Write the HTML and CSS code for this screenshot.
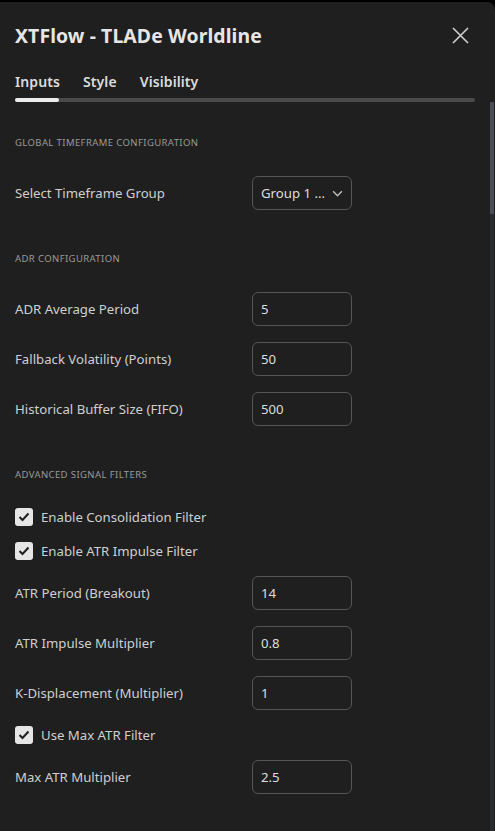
FILE: index.html
```html
<!DOCTYPE html>
<html lang="en">
<head>
  <meta charset="UTF-8" />
  <meta name="viewport" content="width=device-width, initial-scale=1.0"/>
  <title>XTFlow - TLADe Worldline</title>
  <link rel="stylesheet" href="styles.css">
</head>
<body>

  <div class="dialog">
    <!-- Cabecera -->
    <div class="dialog-head">
      <h1 class="dialog-title">XTFlow - TLADe Worldline</h1>
      <button class="close-btn" aria-label="Close">
        <svg width="17" height="17" viewBox="0 0 17 17"><path d="M1 1L16 16M16 1L1 16" stroke="#cfcfcf" stroke-width="1.6" fill="none"/></svg>
      </button>
    </div>

    <!-- Pestañas -->
    <ul class="tab-list" role="tablist">
      <li><button role="tab" aria-selected="true">Inputs</button></li>
      <li><button role="tab" aria-selected="false">Style</button></li>
      <li><button role="tab" aria-selected="false">Visibility</button></li>
    </ul>
    <div class="tab-track"><span class="tab-ink"></span></div>

    <div class="body-wrap">
      <div class="settings">
        <div class="group-title">GLOBAL TIMEFRAME CONFIGURATION</div>
        <div class="row">
          <span class="label">Select Timeframe Group</span>
          <div class="select">
            <span>Group 1 ...</span>
            <svg width="10" height="6" viewBox="0 0 10 6"><path d="M1 1L5 5L9 1" stroke="#bdbdbd" stroke-width="1.4" fill="none"/></svg>
          </div>
        </div>

        <div class="group-title">ADR CONFIGURATION</div>
        <div class="row">
          <span class="label">ADR Average Period</span>
          <div class="field">5</div>
        </div>
        <div class="row">
          <span class="label">Fallback Volatility (Points)</span>
          <div class="field">50</div>
        </div>
        <div class="row">
          <span class="label">Historical Buffer Size (FIFO)</span>
          <div class="field">500</div>
        </div>

        <div class="group-title">ADVANCED SIGNAL FILTERS</div>
        <label class="check-row">
          <span class="check"><svg width="12" height="10" viewBox="0 0 12 10"><path d="M1.5 5L4.5 8L10.5 1.5" stroke="#1f1f1f" stroke-width="2" fill="none"/></svg></span>
          Enable Consolidation Filter
        </label>
        <label class="check-row">
          <span class="check"><svg width="12" height="10" viewBox="0 0 12 10"><path d="M1.5 5L4.5 8L10.5 1.5" stroke="#1f1f1f" stroke-width="2" fill="none"/></svg></span>
          Enable ATR Impulse Filter
        </label>
        <div class="row">
          <span class="label">ATR Period (Breakout)</span>
          <div class="field">14</div>
        </div>
        <div class="row">
          <span class="label">ATR Impulse Multiplier</span>
          <div class="field">0.8</div>
        </div>
        <div class="row">
          <span class="label">K-Displacement (Multiplier)</span>
          <div class="field">1</div>
        </div>
        <label class="check-row">
          <span class="check"><svg width="12" height="10" viewBox="0 0 12 10"><path d="M1.5 5L4.5 8L10.5 1.5" stroke="#1f1f1f" stroke-width="2" fill="none"/></svg></span>
          Use Max ATR Filter
        </label>
        <div class="row">
          <span class="label">Max ATR Multiplier</span>
          <div class="field">2.5</div>
        </div>
      </div>

      <!-- Barra de desplazamiento -->
      <div class="scrollbar"><span class="thumb"></span></div>
    </div>
  </div>

</body>
</html>
```

FILE: styles.css
```css
/* Página */
html, body {
  margin: 0;
  height: 100%;
  background: #000;
}
body {
  padding-top: 2px;
  box-sizing: border-box;
  font-family: "Noto Sans", sans-serif;
  color: #cfcfcf;
}

/* Contenedor del diálogo */
.dialog {
  height: 100%;
  background: #1f1f1f;
  border-top-right-radius: 8px;
  display: flex;
  flex-direction: column;
  overflow: hidden;
}

.dialog-head {
  display: flex;
  align-items: center;
  justify-content: space-between;
  padding: 19px 26px 0 15px;
  height: 28px;
}
.dialog-title {
  margin: 0;
  font-size: 19.4px;
  font-weight: 700;
  color: #e6e6e6;
  letter-spacing: 0.1px;
}
.close-btn {
  background: none;
  border: none;
  padding: 0;
  display: flex;
  cursor: pointer;
}

/* Pestañas */
.tab-list {
  display: flex;
  gap: 23px;
  margin: 0;
  padding: 21px 15px 0;
  list-style: none;
}
.tab-list button {
  background: none;
  border: none;
  padding: 0;
  font-family: inherit;
  font-size: 14px;
  font-weight: 600;
  letter-spacing: 0.1px;
  color: #dcdcdc;
  line-height: 20px;
  cursor: pointer;
}
.tab-track {
  margin: 6px 20px 0 15px;
  height: 4px;
  border-radius: 2px;
  background: #4a4a4a;
}
.tab-ink {
  display: block;
  width: 44px;
  height: 4px;
  border-radius: 2px;
  background: #ececec;
}

/* Área de ajustes */
.body-wrap {
  flex: 1;
  display: flex;
  min-height: 0;
}
.settings {
  flex: 1;
  padding-left: 15px;
}

.group-title {
  padding: 32px 0 16px;
  line-height: 18px;
  font-size: 9.5px;
  color: #9a9a9a;
  letter-spacing: 0.4px;
}

.row {
  display: flex;
  align-items: center;
  height: 50px;
  font-size: 13.2px;
}
.label {
  width: 237px;
}

.field,
.select {
  box-sizing: border-box;
  width: 100px;
  height: 34px;
  border: 1px solid #555;
  border-radius: 6px;
  padding: 0 8px;
  display: flex;
  align-items: center;
  font-size: 13.2px;
  color: #dedede;
}
.select {
  justify-content: space-between;
  padding-right: 8px;
}
.select svg {
  width: 11px;
  height: 7px;
}

.check-row {
  display: flex;
  align-items: center;
  gap: 8px;
  height: 34px;
  font-size: 13.2px;
}
.check {
  width: 18px;
  height: 18px;
  border-radius: 3px;
  background: #e6e6e6;
  display: flex;
  align-items: center;
  justify-content: center;
}

/* Barra de desplazamiento */
.scrollbar {
  width: 4px;
  margin-right: 1px;
  background: #2a2a33;
  display: flex;
  flex-direction: column;
}
.thumb {
  height: 112px;
  background: #4d4d57;
  border-radius: 1px;
}
```
